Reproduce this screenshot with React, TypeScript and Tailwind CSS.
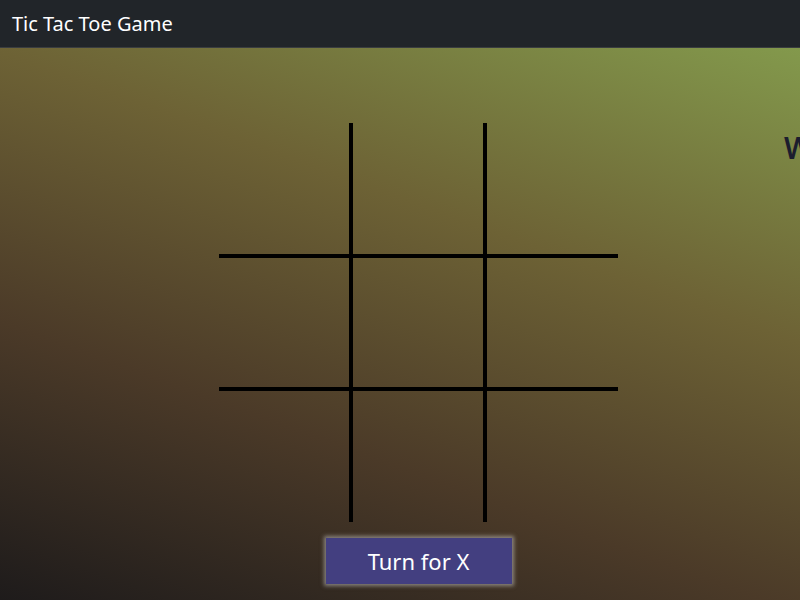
import React, { useState } from "react";

type Cell = "X" | "O" | null;

function Board({ cells, onPlay }: { cells: Cell[]; onPlay: (i: number) => void }) {
  return (
    <div className="grid grid-cols-[134px_134px_131px] grid-rows-[135px_133px_131px]">
      {cells.map((c, i) => {
        const col = i % 3;
        const row = Math.floor(i / 3);
        return (
          <button
            key={i}
            onClick={() => onPlay(i)}
            className={
              "flex items-center justify-center text-5xl text-black border-black " +
              (col < 2 ? "border-r-4 " : "") +
              (row < 2 ? "border-b-4" : "")
            }
          >
            {c}
          </button>
        );
      })}
    </div>
  );
}

export default function App() {
  const [cells, setCells] = useState<Cell[]>(Array(9).fill(null));
  const [turn, setTurn] = useState<"X" | "O">("X");

  const play = (i: number) => {
    if (cells[i]) return;
    const next = [...cells];
    next[i] = turn;
    setCells(next);
    setTurn(turn === "X" ? "O" : "X");
  };

  return (
    <div className="h-screen flex flex-col overflow-hidden font-['Noto_Sans',sans-serif]">
      {/* Header */}
      <div className="h-12 shrink-0 bg-[#212529] border-b border-[#3a3d40] flex items-center px-3">
        <span className="text-white text-[20px]">Tic Tac Toe Game</span>
      </div>

      {/* Game */}
      <div className="flex-1 flex pl-[219px] pt-[75px] bg-[linear-gradient(20deg,#1e1b1b_0%,#4b3a28_33%,#6d6235_65%,#83994c_100%)]">
        <div className="flex flex-col items-center shrink-0">
          <Board cells={cells} onPlay={play} />
          <button className="mt-4 w-[186px] h-[46px] bg-[#433f80] text-white text-[22px] shadow-[0_0_4px_2px_rgba(200,200,200,0.55)]">
            Turn for {turn}
          </button>
        </div>
        <div className="ml-[166px] pt-0.5 shrink-0 whitespace-nowrap text-[30px] font-semibold text-[#1c1d2e]">
          Winner: none
        </div>
      </div>
    </div>
  );
}
